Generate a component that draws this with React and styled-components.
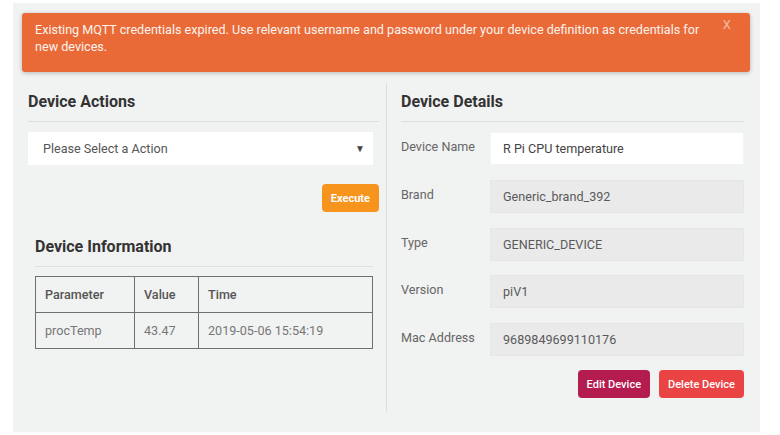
import React from 'react';
import styled, { createGlobalStyle } from 'styled-components';

const GlobalStyle = createGlobalStyle`
  body {
    margin: 0;
    background: #ffffff;
    font-family: Roboto, "Liberation Sans", Arial, sans-serif;
  }
`;

const Panel = styled.div`
  margin: 3px 0 0 13px;
  width: 747px;
  height: 429px;
  background: #f1f2f2;
  padding: 10px 10px 0 9px;
  box-sizing: border-box;
`;

const Alert = styled.div`
  position: relative;
  background: #e96a37;
  color: #fdf3ee;
  font-size: 12.6px;
  line-height: 17px;
  padding: 8px 40px 17px 13px;
  border-radius: 3px;
  box-shadow: 0 1px 4px rgba(0, 0, 0, 0.25);
`;

const CloseX = styled.span`
  position: absolute;
  top: 3px;
  right: 19px;
  font-size: 13px;
  color: rgba(255, 255, 255, 0.55);
  cursor: pointer;
`;

const Columns = styled.div`
  display: flex;
  margin-top: 11px;
  padding-left: 6px;
  height: 329px;
`;

const LeftCol = styled.div`
  width: 351px;
  display: flex;
  flex-direction: column;
`;

const Divider = styled.div`
  width: 1px;
  background: #dcdcdc;
  margin: 0 14px 0 7px;
`;

const RightCol = styled.div`
  width: 343px;
  display: flex;
  flex-direction: column;
`;

const Heading = styled.h3`
  margin: 0;
  padding: 9px 0 9px;
  font-size: 16px;
  line-height: 20px;
  font-weight: 700;
  color: #333333;
  border-bottom: 1px solid #dedede;
`;

const Select = styled.div`
  margin: 10px 6px 0 0;
  height: 33px;
  background: #ffffff;
  display: flex;
  align-items: center;
  justify-content: space-between;
  padding: 0 8px 0 15px;
  font-size: 12.6px;
  color: #555555;
`;

const Caret = styled.span`
  font-size: 10px;
  color: #444444;
`;

const ButtonRow = styled.div`
  display: flex;
  justify-content: flex-end;
  gap: 9px;
  margin-top: ${(p) => p.$mt}px;
`;

const Button = styled.button`
  border: none;
  border-radius: 4px;
  height: 28px;
  padding: 0 ${(p) => p.$px || 9}px;
  background: ${(p) => p.$bg};
  color: #ffffff;
  font-family: Roboto, "Liberation Sans", Arial, sans-serif;
  font-size: ${(p) => p.$fs || 11}px;
  font-weight: ${(p) => p.$fw || 500};
  cursor: pointer;
`;

const InfoSection = styled.div`
  margin: 16px 6px 0 7px;
`;

const Table = styled.table`
  margin-top: 9px;
  width: 100%;
  border-collapse: collapse;
  font-size: 12.6px;
`;

const Th = styled.th`
  border: 1px solid #6f6f6f;
  height: 35px;
  padding: 0 9px;
  text-align: left;
  font-weight: 500;
  color: #555555;
  width: ${(p) => p.$w || 'auto'};
`;

const Td = styled.td`
  border: 1px solid #6f6f6f;
  height: 35px;
  padding: 0 9px;
  color: #777777;
`;

const FormRows = styled.div`
  margin-top: 10px;
  display: flex;
  flex-direction: column;
  gap: 14.75px;
`;

const FormRow = styled.div`
  display: flex;
  align-items: flex-start;
`;

const Label = styled.div`
  width: 89px;
  padding-top: 7px;
  font-size: 12.6px;
  color: #666666;
`;

const Field = styled.div`
  flex: 1;
  height: 33px;
  display: flex;
  align-items: center;
  padding: 0 12px;
  font-size: 12.6px;
  color: ${(p) => (p.$readonly ? '#5a5a5a' : '#444444')};
  background: ${(p) => (p.$readonly ? '#eaeaea' : '#ffffff')};
  border: 1px solid ${(p) => (p.$readonly ? '#e6e6e6' : '#f4f4f4')};
  box-sizing: border-box;
`;

const fields = [
  { label: 'Device Name', value: 'R Pi CPU temperature', readonly: false },
  { label: 'Brand', value: 'Generic_brand_392', readonly: true },
  { label: 'Type', value: 'GENERIC_DEVICE', readonly: true },
  { label: 'Version', value: 'piV1', readonly: true },
  { label: 'Mac Address', value: '9689849699110176', readonly: true },
];

const App = () => {
  return (
    <>
      <GlobalStyle />
      <Panel>
        <Alert>
          Existing MQTT credentials expired. Use relevant username and password under your device definition as credentials for new devices.
          <CloseX>X</CloseX>
        </Alert>
        <Columns>
          <LeftCol>
            <Heading>Device Actions</Heading>
            <Select>
              Please Select a Action
              <Caret>▼</Caret>
            </Select>
            <ButtonRow $mt={19}>
              <Button $bg="#f7941d" $fw={700}>Execute</Button>
            </ButtonRow>
            <InfoSection>
              <Heading>Device Information</Heading>
              <Table>
                <thead>
                  <tr>
                    <Th $w="80px">Parameter</Th>
                    <Th $w="45px">Value</Th>
                    <Th>Time</Th>
                  </tr>
                </thead>
                <tbody>
                  <tr>
                    <Td>procTemp</Td>
                    <Td>43.47</Td>
                    <Td>2019-05-06 15:54:19</Td>
                  </tr>
                </tbody>
              </Table>
            </InfoSection>
          </LeftCol>
          <Divider />
          <RightCol>
            <Heading>Device Details</Heading>
            <FormRows>
              {fields.map((f) => (
                <FormRow key={f.label}>
                  <Label>{f.label}</Label>
                  <Field $readonly={f.readonly}>{f.value}</Field>
                </FormRow>
              ))}
            </FormRows>
            <ButtonRow $mt={14}>
              <Button $bg="#b41c50">Edit Device</Button>
              <Button $bg="#e94343">Delete Device</Button>
            </ButtonRow>
          </RightCol>
        </Columns>
      </Panel>
    </>
  );
};

export default App;
